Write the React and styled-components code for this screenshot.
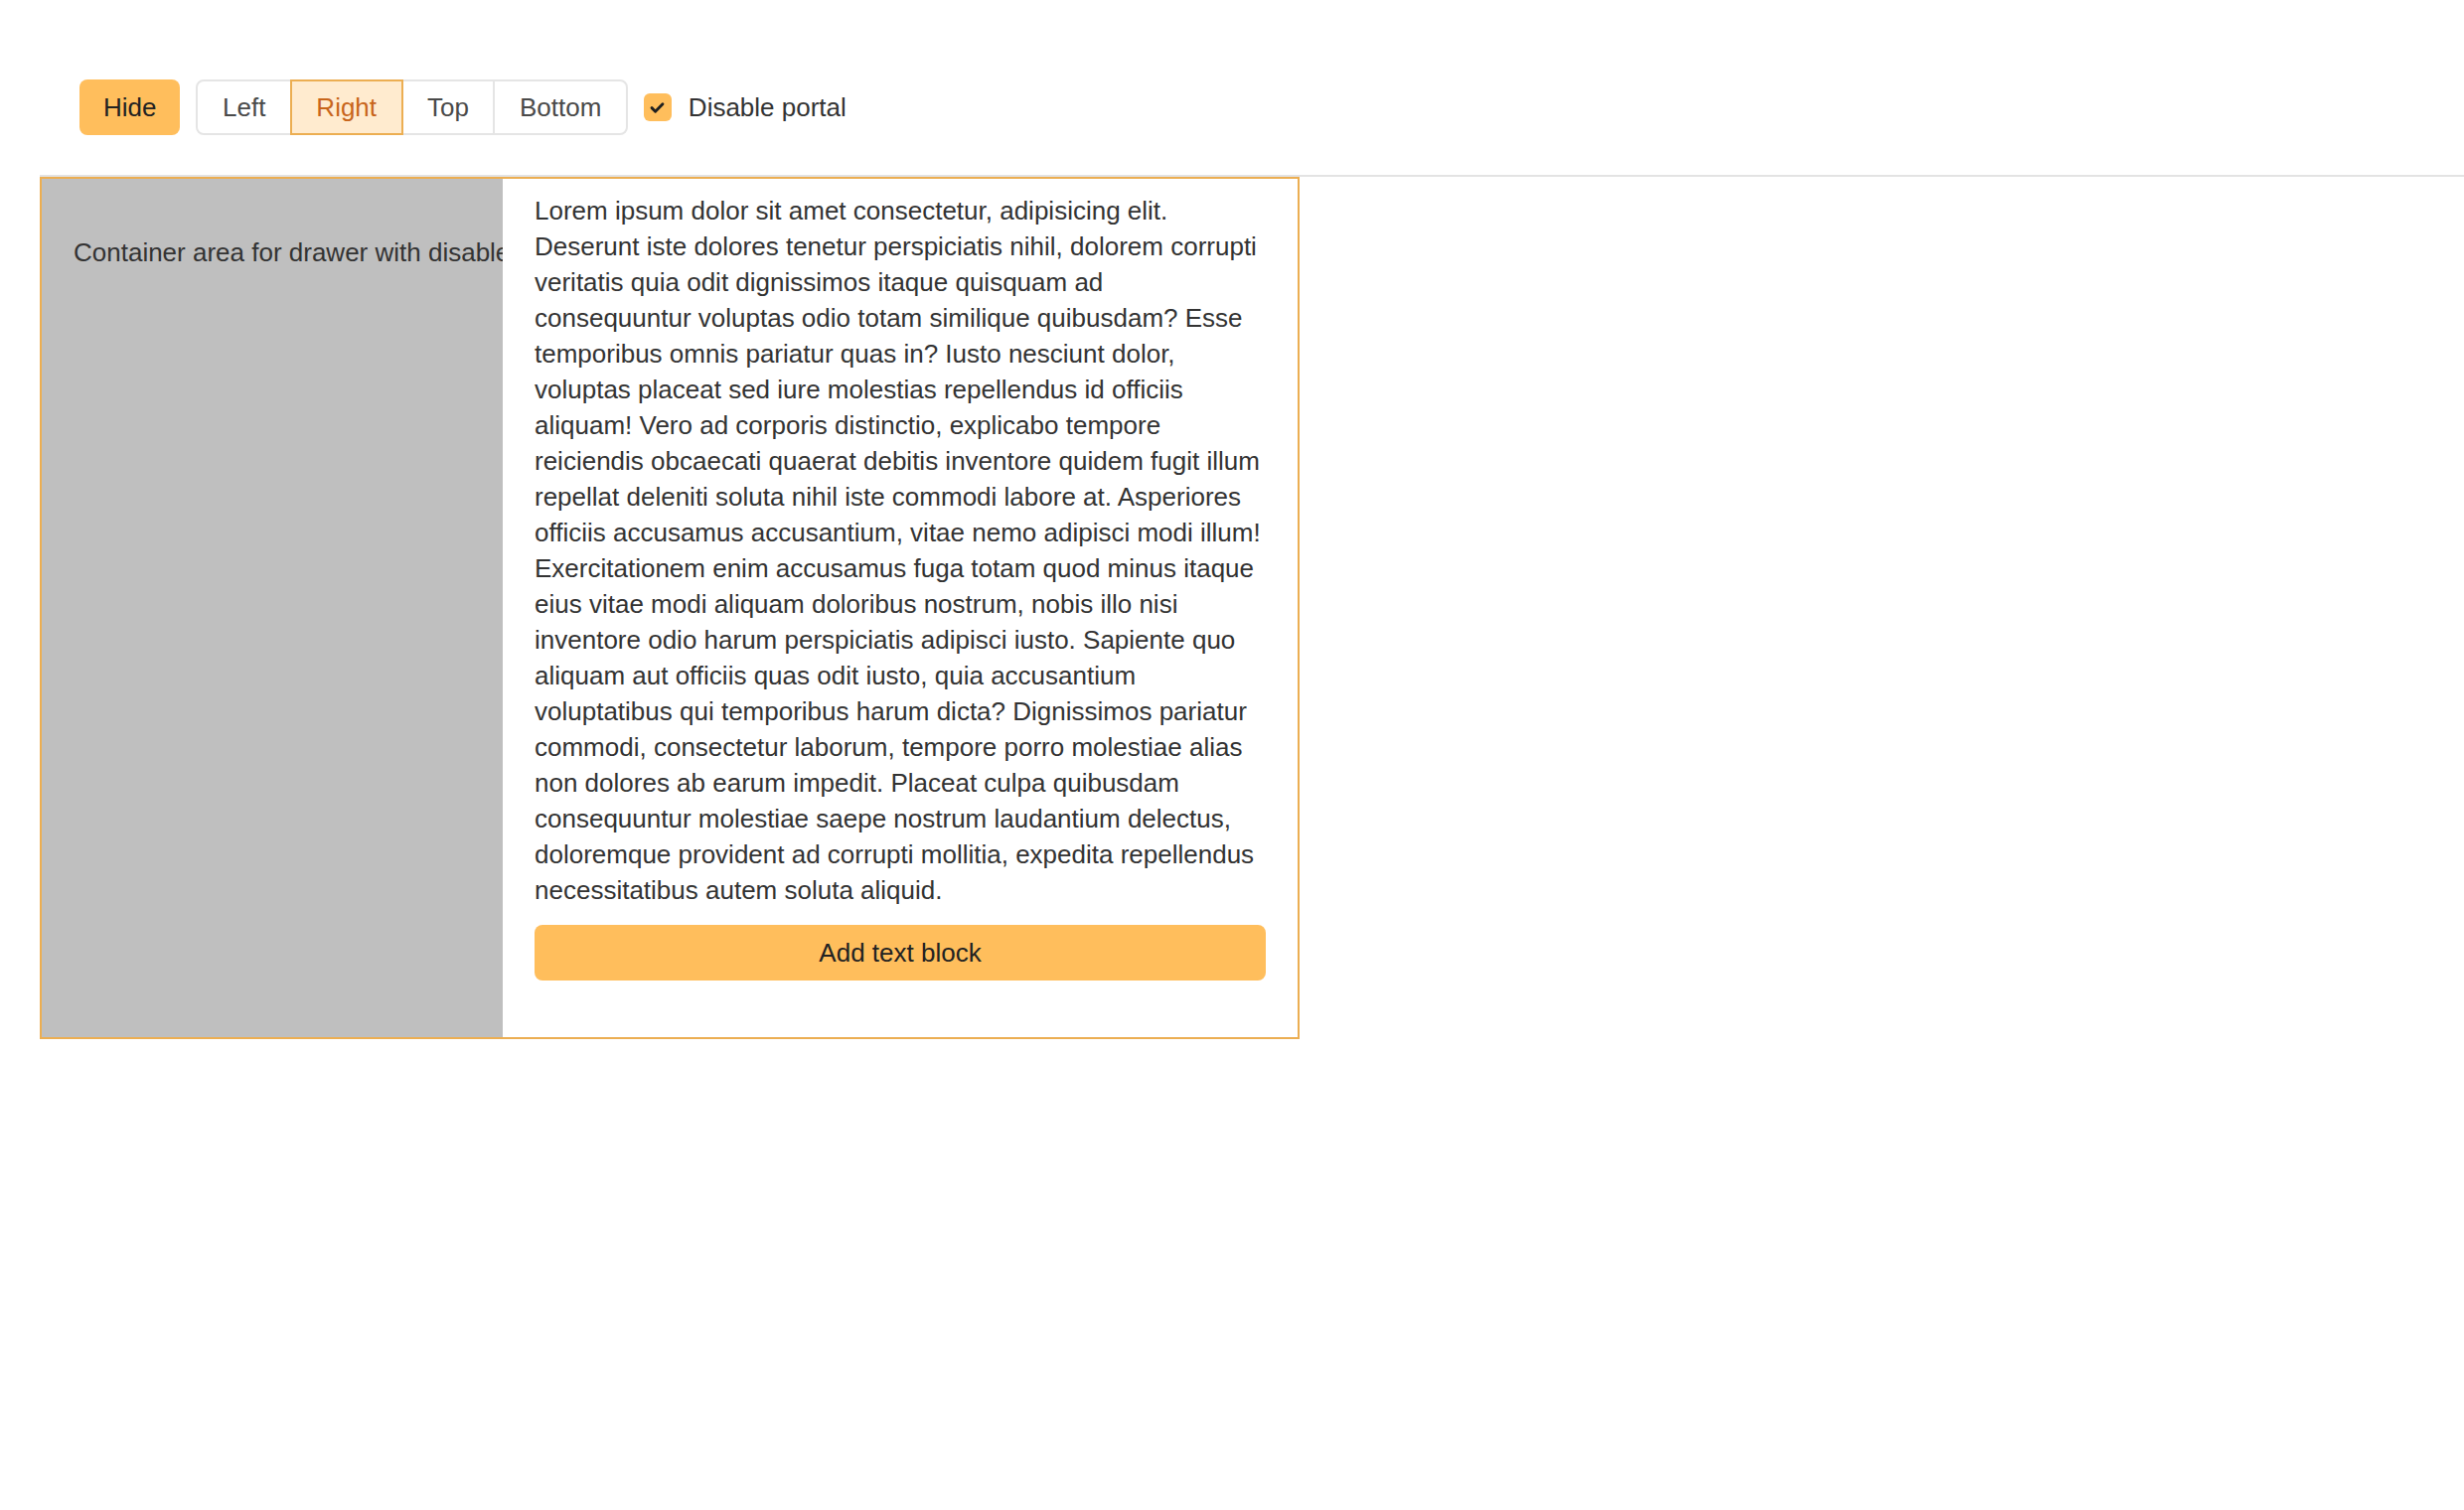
import React, { useState } from "react";
import styled, { createGlobalStyle } from "styled-components";

const GlobalStyle = createGlobalStyle`
  html, body {
    margin: 0;
    padding: 0;
    background: #ffffff;
  }
  body {
    font-family: "Liberation Sans", Arial, sans-serif;
    font-size: 26px;
    color: #333333;
  }
  * {
    box-sizing: border-box;
  }
`;

const lorem =
  "Lorem ipsum dolor sit amet consectetur, adipisicing elit. Deserunt iste dolores tenetur perspiciatis nihil, dolorem corrupti veritatis quia odit dignissimos itaque quisquam ad consequuntur voluptas odio totam similique quibusdam? Esse temporibus omnis pariatur quas in? Iusto nesciunt dolor, voluptas placeat sed iure molestias repellendus id officiis aliquam! Vero ad corporis distinctio, explicabo tempore reiciendis obcaecati quaerat debitis inventore quidem fugit illum repellat deleniti soluta nihil iste commodi labore at. Asperiores officiis accusamus accusantium, vitae nemo adipisci modi illum! Exercitationem enim accusamus fuga totam quod minus itaque eius vitae modi aliquam doloribus nostrum, nobis illo nisi inventore odio harum perspiciatis adipisci iusto. Sapiente quo aliquam aut officiis quas odit iusto, quia accusantium voluptatibus qui temporibus harum dicta? Dignissimos pariatur commodi, consectetur laborum, tempore porro molestiae alias non dolores ab earum impedit. Placeat culpa quibusdam consequuntur molestiae saepe nostrum laudantium delectus, doloremque provident ad corrupti mollitia, expedita repellendus necessitatibus autem soluta aliquid.";

const placements = ["Left", "Right", "Top", "Bottom"];

function App() {
  const [placement, setPlacement] = useState("Right");
  const [disablePortal, setDisablePortal] = useState(true);
  const [open, setOpen] = useState(true);

  return (
    <Page>
      <GlobalStyle />
      <Toolbar>
        <PrimaryButton onClick={() => setOpen(!open)}>
          {open ? "Hide" : "Show"}
        </PrimaryButton>

        <SegmentGroup>
          {placements.map((p) => (
            <Segment
              key={p}
              $active={p === placement}
              onClick={() => setPlacement(p)}
            >
              {p}
            </Segment>
          ))}
        </SegmentGroup>

        <CheckLabel onClick={() => setDisablePortal(!disablePortal)}>
          <CheckBox $checked={disablePortal}>
            {disablePortal && (
              <svg width="19" height="19" viewBox="0 0 16 16" fill="none">
                <path
                  d="M3.4 8.1l3 3 6.2-6.3"
                  stroke="#1f1f1f"
                  strokeWidth="2.4"
                  strokeLinecap="round"
                  strokeLinejoin="round"
                />
              </svg>
            )}
          </CheckBox>
          Disable portal
        </CheckLabel>
      </Toolbar>

      <DrawerContainer>
        <ContainerText>Container area for drawer with disabled portal</ContainerText>

        {open && (
          <Drawer>
            <DrawerText>{lorem}</DrawerText>
            <BlockButton>Add text block</BlockButton>
          </Drawer>
        )}
      </DrawerContainer>
    </Page>
  );
}

export default App;

const Page = styled.div`
  padding: 40px 0 0 40px;
  min-height: 100vh;
`;

const Toolbar = styled.div`
  display: flex;
  align-items: center;
  gap: 16px;
  padding: 40px;
  border-bottom: 2px solid #e3e3e3;
`;

const PrimaryButton = styled.button`
  height: 56px;
  padding: 0 24px;
  border: none;
  border-radius: 8px;
  background-color: #ffbe5c;
  color: #222222;
  font-family: inherit;
  font-size: 26px;
  cursor: pointer;
`;

const SegmentGroup = styled.div`
  display: flex;
`;

const Segment = styled.button`
  position: relative;
  height: 56px;
  padding: 0 24.5px;
  margin-left: -2px;
  border: 2px solid ${(p) => (p.$active ? "#ecae52" : "#e5e5e5")};
  background-color: ${(p) => (p.$active ? "#ffebcf" : "#ffffff")};
  color: ${(p) => (p.$active ? "#c8651b" : "#4a4a4a")};
  z-index: ${(p) => (p.$active ? 1 : 0)};
  font-family: inherit;
  font-size: 26px;
  cursor: pointer;

  &:first-child {
    margin-left: 0;
    border-radius: 8px 0 0 8px;
  }
  &:last-child {
    border-radius: 0 8px 8px 0;
  }
`;

const CheckLabel = styled.label`
  display: flex;
  align-items: center;
  gap: 17px;
  color: #333333;
  cursor: pointer;
  user-select: none;
`;

const CheckBox = styled.span`
  display: flex;
  align-items: center;
  justify-content: center;
  width: 28px;
  height: 28px;
  border-radius: 6px;
  background-color: ${(p) => (p.$checked ? "#ffbe5c" : "#ffffff")};
  border: ${(p) => (p.$checked ? "none" : "2px solid #cccccc")};
`;

const DrawerContainer = styled.div`
  position: relative;
  width: 1268px;
  height: 868px;
  border: 2px solid #ecae52;
  background-color: #bfbfbf;
  overflow: hidden;
  padding: 32px;
`;

const ContainerText = styled.p`
  margin: 24px 0;
  line-height: 36px;
  color: #333333;
  white-space: nowrap;
`;

const Drawer = styled.div`
  position: absolute;
  top: 0;
  right: 0;
  bottom: 0;
  width: 800px;
  display: flex;
  flex-direction: column;
  gap: 17px;
  padding: 14px 32px 32px;
  background-color: #ffffff;
`;

const DrawerText = styled.p`
  margin: 0;
  line-height: 36px;
  color: #333333;
`;

const BlockButton = styled.button`
  width: 100%;
  height: 56px;
  flex-shrink: 0;
  border: none;
  border-radius: 8px;
  background-color: #ffbe5c;
  color: #222222;
  font-family: inherit;
  font-size: 26px;
  cursor: pointer;
`;
